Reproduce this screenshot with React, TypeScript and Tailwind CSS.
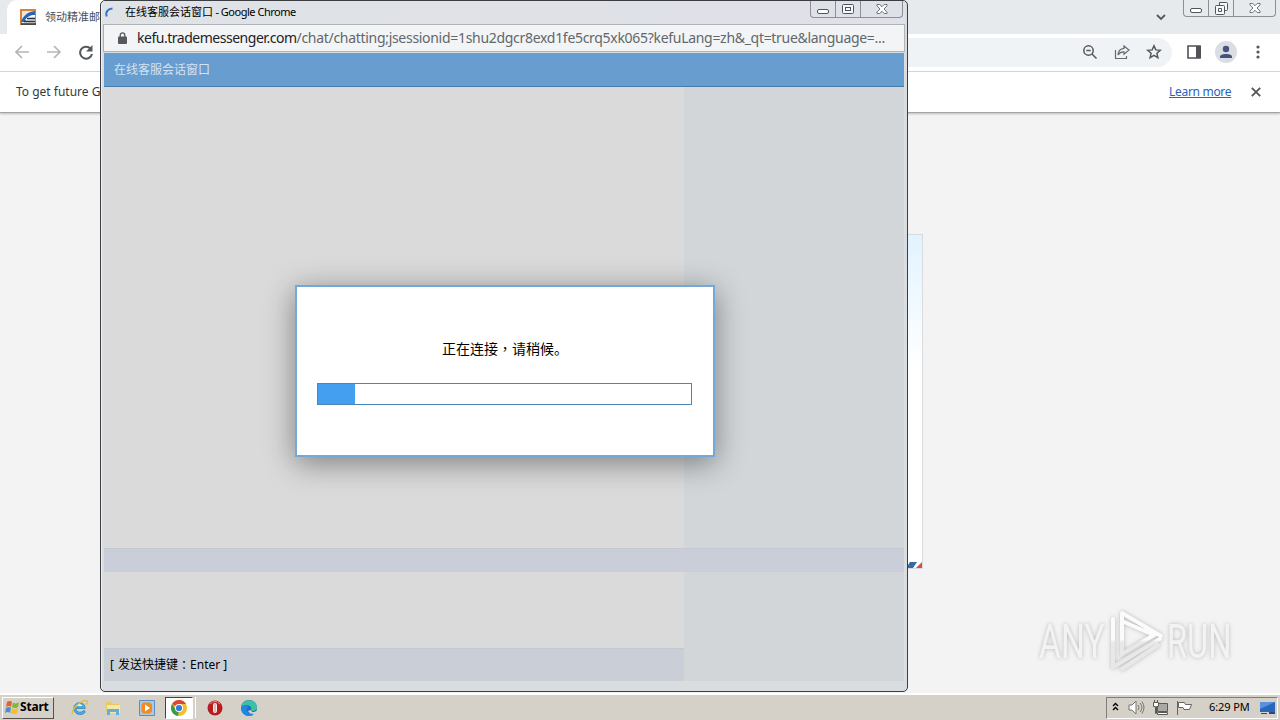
import React from 'react'

const WindowButtons = ({restored}: any) => {
  return (
    <div className={restored ? "flex h-[17px] w-[93px] rounded-b-[4px] border border-t-0 border-[#8b8f96] bg-[#e7eaed]" : "flex h-[17px] w-[93px] rounded-b-[4px] border border-t-0 border-[#8b8f96] bg-[#dfe1e8]"}>
      <div className="flex w-[25px] items-end justify-center border-r border-[#8b8f96] pb-[3px]">
        <div className="h-[5px] w-[12px] rounded-[2px] border border-[#50545c] bg-white" />
      </div>
      <div className="flex w-[25px] items-center justify-center border-r border-[#8b8f96]">
        {restored ? (
          <svg width="13" height="13" viewBox="0 0 13 13" fill="#f7f8fa" stroke="#50545c">
            <path d="M4.500.5h7q1 0 1 1v6q0 1-1 1h-7z" />
            <path d="M1.500 3.500h7q1 0 1 1v7q0 1-1 1h-7q-1 0-1-1v-7q0-1 1-1z" />
            <path d="M3.500 6.500h3v3h-3z" />
          </svg>
        ) : (
          <svg width="12" height="10" viewBox="0 0 12 10" fill="#f7f8fa" stroke="#50545c">
            <rect x=".5" y=".5" width="11" height="9" rx="1" />
            <rect x="3.500" y="3.500" width="5" height="3" />
          </svg>
        )}
      </div>
      <div className="flex flex-1 items-center justify-center">
        <svg width="12" height="10" viewBox="0 0 13 11" fill="#fff" stroke="#50545c" strokeWidth=".9">
          <path d="M1 .5h3l2.500 2.500L9 .5h3v1.500L8.700 5.500 12 9v1.500H9L6.500 8 4 10.500H1V9l3.300-3.500L1 2z" />
        </svg>
      </div>
    </div>
  )
}

const MainBrowser = () => {
  return (
    <div className="flex h-[693px] flex-col bg-[#f3f3f3]">
      <div className="flex h-[34px] shrink-0 justify-between bg-[#e7eaed]">
        <div className="ml-[7px] flex w-[240px] items-center rounded-tl-[10px] rounded-tr-lg bg-white pl-[13px]">
          <svg width="16" height="16" viewBox="0 0 16 16" className="shrink-0">
            <path d="M0 0h16v16H0z" fill="#d8833b" />
            <path d="M2 2h13v13H2z" fill="#f3e5d2" />
            <path d="M1 13C3 7 7 3 15 2v5C10 7 7 9 6 13z" fill="#2965b5" />
            <path d="M5 11c2-3 5-5 10-5v2c-4 0-7 1-8 4z" fill="#fff" />
            <path d="M7 9.500h8M4 12.500h11M1 15h15" stroke="#1d3559" strokeWidth="1.500" />
          </svg>
          <span className="ml-[9px] text-[11px] whitespace-nowrap text-[#4b4f54]">领动精准邮件</span>
        </div>
        <div className="flex items-start pr-[4px]">
          <svg width="10" height="7" viewBox="0 0 10 7" className="mt-[14px] mr-[17px]" fill="none" stroke="#55585d" strokeWidth="1.800">
            <path d="M1 1l4 4 4-4" />
          </svg>
          <WindowButtons restored={true} />
        </div>
      </div>

      <div className="flex h-[38px] shrink-0 items-center border-b border-[#d5d7da] bg-white pb-px pl-[14px]">
        <svg width="80" height="16" viewBox="0 0 80 16" fill="none" className="shrink-0">
          <path d="M15 8H2M8 2L2 8l6 6M33 8h13M40 2l6 6-6 6" stroke="#b4b6b9" strokeWidth="1.700" />
          <path d="M76.500 4.500A6 6 0 1 0 78 10" stroke="#55585c" strokeWidth="2" />
          <path d="M78.500 1v6.500H72z" fill="#55585c" />
        </svg>
        <div className="ml-[10px] flex h-[29px] w-[1068px] items-center justify-end gap-[16px] rounded-full bg-[#f0f3f6] pr-[10px]">
          <svg width="16" height="16" viewBox="0 0 16 16" fill="none" stroke="#55585c" strokeWidth="1.500">
            <circle cx="6.500" cy="6.500" r="4.700" />
            <path d="M10 10l4.500 4.500M4.300 6.500h4.400" />
          </svg>
          <svg width="16" height="16" viewBox="0 0 16 16" fill="none" stroke="#65686c" strokeWidth="1.200">
            <path d="M1.500 6v8.500h11V12" />
            <path d="M10 2l5 4-5 4.200V7.800C7 7.700 5.300 9 4 11c.3-4 2.300-6.400 6-6.700z" />
          </svg>
          <svg width="16" height="16" viewBox="0 0 16 16" fill="none" stroke="#55585c" strokeWidth="1.500">
            <path d="M8 1.800l1.800 4.100 4.500.4-3.400 3 1 4.400L8 11.400l-3.900 2.300 1-4.400-3.400-3 4.500-.4z" />
          </svg>
        </div>
        <svg width="14" height="14" viewBox="0 0 14 14" className="ml-[15px]">
          <path d="M1 1h12v12H1z" fill="#fff" stroke="#4f5256" strokeWidth="1.600" />
          <path d="M9 1h5v12H9z" fill="#4f5256" />
        </svg>
        <svg width="22" height="22" viewBox="0 0 22 22" className="ml-[14px]">
          <circle cx="11" cy="11" r="11" fill="#dadde3" />
          <circle cx="11" cy="8" r="3.200" fill="#46537a" />
          <path d="M5 17v-1.500c0-3.500 12-3.500 12 0V17z" fill="#46537a" />
        </svg>
        <svg width="4" height="14" viewBox="0 0 4 14" className="ml-[19px]" fill="#55585c">
          <circle cx="2" cy="2" r="1.600" />
          <circle cx="2" cy="7" r="1.600" />
          <circle cx="2" cy="12" r="1.600" />
        </svg>
      </div>

      <div className="flex h-[41px] shrink-0 items-center border-b border-[#a4a5a4] bg-white pr-[19px] pl-[16px] text-[12px] text-[#35383c] shadow-[0_1px_2px_#bbb]">
        <span className="flex-1 whitespace-nowrap">To get future Google Chrome updates</span>
        <span className="w-[64px] tracking-[-0.300px] whitespace-nowrap text-[#2764ba] underline">Learn more</span>
        <svg width="10" height="10" viewBox="0 0 10 10" className="ml-[18px]" stroke="#55585c" strokeWidth="1.900">
          <path d="M.8.800l8.400 8.400M9.200.800L.8 9.200" />
        </svg>
      </div>

      <div className="flex flex-1 justify-center pt-[121px]">
        <div className="flex h-[335px] w-[566px] items-end justify-end border border-[#d9dcde] bg-linear-to-b from-[#e1f3ff] to-white to-40%">
          <svg width="16" height="6" viewBox="0 0 16 6">
            <path d="M0 6L4 0h7L7 6z" fill="#386c9e" />
            <path d="M10 6l6-6v6z" fill="#d84a56" />
          </svg>
        </div>
      </div>
    </div>
  )
}

const ChatWindow = () => {
  return (
    <div className="absolute top-0 left-[100px] flex h-[692px] w-[808px] flex-col rounded-[5px] border border-[#3b3d42] bg-[#dadde0] px-[3px] shadow-[inset_1px_0_0_#eef1f3]">
      <div className="-mx-[2px] flex h-[23px] shrink-0 items-start justify-between rounded-t-[4px] bg-linear-to-r from-[#dfe3e6] to-[#dfe0e9] px-[2px]">
        <div className="flex h-[23px] items-center">
          <svg width="12" height="14" viewBox="0 0 12 14" fill="none" stroke="#3273d5" strokeWidth="2">
            <path d="M2.800 10.500C1 6 4 2.500 8.500 2.500" />
          </svg>
          <span className="ml-[9px] text-[11px] whitespace-nowrap text-black">
            <span>在线客服会话窗口</span>
            <span className="tracking-[-0.480px]"> - Google Chrome</span>
          </span>
        </div>
        <div className="mr-px">
          <WindowButtons restored={false} />
        </div>
      </div>

      <div className="-mx-px flex h-[28px] shrink-0 items-center border border-[#b0b3b6] bg-[#f2f4f6] pl-[14px]">
        <svg width="9" height="12" viewBox="0 0 9 12" className="shrink-0">
          <path d="M2.200 5V3.200c0-3 4.600-3 4.600 0V5" fill="none" stroke="#55585c" strokeWidth="1.300" />
          <rect y="4.500" width="9" height="7.500" rx="1" fill="#55585c" />
        </svg>
        <span className="mb-[2px] ml-[10px] text-[14px] whitespace-nowrap text-[#62676c]">
          <span className="tracking-[-0.480px] text-[#202327]">kefu.trademessenger.com</span>
          <span className="tracking-[-0.300px]">/chat/chatting;jsessionid=1shu2dgcr8exd1fe5crq5xk065?kefuLang=zh&amp;_qt=true&amp;language=...</span>
        </span>
      </div>

      <div className="mt-px flex h-[34px] shrink-0 items-center border-b border-[#477ba8] bg-[#689dcf] pl-[10px] text-[12px] text-[#d3e3f2]">
        在线客服会话窗口
      </div>

      <div className="grid h-[461px] shrink-0 grid-cols-[580px_1fr]">
        <div className="bg-[#dadada]" />
        <div className="bg-[#d2d6d9]" />
      </div>
      <div className="h-[24px] shrink-0 border-t border-[#c3c8d1] bg-[#caced8]" />
      <div className="grid h-[109px] shrink-0 grid-cols-[580px_1fr]">
        <div className="flex flex-col bg-[#dadada]">
          <div className="h-[76px]" />
          <div className="flex h-[33px] items-center border-t border-[#c3c8d1] bg-[#cacfd7] pl-[6px] text-[12px] whitespace-pre text-black">
            <span>[ </span>
            <span className="ml-px">发送快捷键</span>
            <span className="font-['Noto_Sans_CJK_TC',sans-serif]">：</span>
            <span>Enter ]</span>
          </div>
        </div>
        <div className="bg-[#d2d6d9]" />
      </div>

      <div className="absolute top-[284px] left-[194px] h-[172px] w-[420px] border-2 border-[#74a9d7] bg-white px-[20px] shadow-[0_6px_28px_rgba(0,0,0,0.42)]">
        <div className="mt-[49px] h-[24px] text-center text-[14px] leading-[24px] whitespace-nowrap text-black">
          正在连接<span className="font-['Noto_Sans_CJK_TC',sans-serif]">，</span>请稍候。
        </div>
        <div className="mt-[23px] h-[22px] w-[375px] border border-[#4b88b9]">
          <div className="h-full w-[37px] bg-[#459ff0]" />
        </div>
      </div>
    </div>
  )
}

const Watermark = () => {
  return (
    <div className="absolute top-[608px] left-[1038px] flex h-[66px] w-[200px] items-center opacity-80 drop-shadow-[0_0_2px_#aaa]">
      <svg width="200" height="66" viewBox="0 0 200 66" fill="none">
        <defs>
          <linearGradient id="mark" gradientUnits="userSpaceOnUse" x1="0" y1="0" x2="0" y2="66">
            <stop offset="0.480" stopColor="#fdfdfd" />
            <stop offset="0.520" stopColor="#e6e6e6" />
          </linearGradient>
        </defs>
        <text transform="translate(1 50) scale(.7 1)" fontSize="48" fontFamily="Roboto" fill="#f3f3f3">ANY</text>
        <text transform="translate(129 50) scale(.68 1)" fontSize="48" fontFamily="Roboto" fill="#f3f3f3">RUN</text>
        <path d="M75 11v48M84 5l39 23M84 5v41l32-19-30-13M75 59l47-28M84 61l36-24" stroke="url(#mark)" strokeWidth="4" strokeLinecap="round" />
      </svg>
    </div>
  )
}

const Taskbar = () => {
  return (
    <div className="flex h-[27px] items-center border-t-2 border-white bg-[#d5d0c8] pl-[2px]">
      <div className="flex h-[22px] w-[52px] items-center border border-t-white border-r-[#55524d] border-b-[#55524d] border-l-white pl-[2px] text-[12px] font-bold text-black">
        <svg width="15" height="15" viewBox="0 0 15 15" className="shrink-0">
          <path d="M2 2q3-2 5 0L6 7Q4 5 1 7z" fill="#e4632c" />
          <path d="M8 2.500q3 2 6-.2L13 7q-3 2-6 0z" fill="#7ab83f" />
          <path d="M1 8q3-2 5 0l-1 5q-2-2-5 0z" fill="#4b8fd1" />
          <path d="M7 8q3 2 6 0l-1 5q-3 2-6 0z" fill="#f4bd35" />
        </svg>
        <span className="pb-px tracking-[-0.200px]">Start</span>
      </div>
      <svg width="17" height="17" viewBox="0 0 18 18" className="ml-[17px]" fill="none">
        <path d="M14.500 10H5c1 5 6 5 9 2l1 2c-4 5-13 2-12-5s12-7 12 1z" fill="#4baee3" stroke="#398bc6" />
        <path d="M6 7.500h6c-1-3-5-3-6 0z" fill="#e6f5fc" />
        <path d="M2 16C-2 12 13-1 17 2c1 1 0 3-1 4" stroke="#e8bc42" strokeWidth="1.500" />
      </svg>
      <svg width="16" height="16" viewBox="0 0 16 16" className="ml-[17px]">
        <path d="M1 2h5l2 2h6v8H1z" fill="#e7c867" />
        <path d="M2 5h13v8H2z" fill="#f6e7a3" />
        <path d="M2 15V9h12v6h-3v-3H5v3z" fill="#64aeda" />
      </svg>
      <svg width="16" height="16" viewBox="0 0 16 16" className="ml-[18px]">
        <path d="M.5.500h15v15H.5z" fill="#a9cbe6" stroke="#5c8fbd" />
        <path d="M4 2.500h7l2 2v7l-2 2H4l-1.500-2v-7z" fill="#f18a21" />
        <path d="M6 4.500v7l5-3.500z" fill="#fff" />
      </svg>
      <div className="ml-[10px] flex h-[22px] w-[28px] items-center justify-center border border-t-[#45423e] border-r-white border-b-white border-l-[#45423e] bg-white">
        <svg width="16" height="16" viewBox="0 0 16 16">
          <circle cx="8" cy="8" r="8" fill="#f4bd2b" />
          <path d="M8 8L1.100 4A8 8 0 0 1 15 4H8z" fill="#dc4639" />
          <path d="M8 8l-1 8A8 8 0 0 1 1.100 4L5 10l3 2z" fill="#379b51" />
          <circle cx="8" cy="8" r="4" fill="#fff" />
          <circle cx="8" cy="8" r="3.100" fill="#3979dc" />
        </svg>
      </div>
      <div className="h-[21px] w-[3px] border-r border-white bg-[#d5d0c8]" />
      <svg width="16" height="16" viewBox="0 0 16 16" className="ml-[11px]">
        <circle cx="8" cy="8" r="7.500" fill="#b71c20" />
        <path d="M3 4q5-5 10 0" stroke="#e98c83" fill="none" />
        <rect x="6" y="3" width="4" height="10" rx="2" fill="#f7e9e5" />
        <rect x="7.500" y="4" width="1" height="8" fill="#c98d8b" />
      </svg>
      <svg width="16" height="16" viewBox="0 0 16 16" className="ml-[18px]">
        <circle cx="8" cy="8" r="8" fill="#1771c9" />
        <path d="M0 7C1-2 15-2 16 7c0 4-5 5-6 3 2-4-5-7-10-3z" fill="#3ebfa8" />
        <path d="M10 10c0 2 3 3 5 1l1 1-2 4-4-1-3-4z" fill="#d5d0c8" />
        <path d="M0 8c2-4 7-3 7-1-3 3-1 7 6 7C7 19 0 14 0 8z" fill="#2587dc" />
      </svg>

      <div className="mr-[2px] ml-auto flex h-[22px] w-[172px] items-center border border-t-[#827e77] border-r-white border-b-white border-l-[#827e77] text-[11px] text-black">
        <svg width="7" height="9" viewBox="0 0 7 9" className="mb-[2px] ml-[5px]" fill="none" stroke="#000" strokeWidth="1.400">
          <path d="M1 4l2.500-2.500L6 4M1 8l2.500-2.500L6 8" />
        </svg>
        <svg width="17" height="15" viewBox="0 0 17 15" className="ml-[9px]" fill="none" stroke="#77746f">
          <path d="M1 5h3l4-4v13l-4-4H1z" fill="#fff" />
          <path d="M10 5q2 2.500 0 5M12 3q4 4.500 0 9M14 1.500q4 6 0 12" />
        </svg>
        <svg width="17" height="16" viewBox="0 0 17 16" className="ml-[7px]" stroke="#5c5a57">
          <path d="M5.500 3.500h10v8h-10z" fill="#aaa9a6" />
          <path d="M5.500 12.500h10v2h-10z" fill="#fff" />
          <path d="M1.500 2.500h5v4h-2v7h-1v-7h-2zM2.500 0v3M5.500 0v3" fill="#fff" />
        </svg>
        <svg width="17" height="16" viewBox="0 0 17 16" className="ml-[7px]" fill="#fff" stroke="#686560">
          <path d="M1.500 1v14M2.500 2.500h6l1 2h6l-2 5H8l-1-2H2.500z" />
        </svg>
        <span className="ml-[16px] w-[39px] tracking-[-0.100px] whitespace-nowrap">6:29 PM</span>
        <svg width="15" height="14" viewBox="0 0 15 14" className="ml-[12px]">
          <path d="M0 1h15v10H0z" fill="#2867bd" />
          <path d="M0 1h15L0 8z" fill="#5792da" />
          <path d="M1 12h6v1H1zM9 11h6v2H9z" fill="#294c7d" />
        </svg>
      </div>
    </div>
  )
}

const App = () => {
  return (
    <div className="relative h-[720px] w-[1280px] overflow-hidden font-['Noto_Sans','Noto_Sans_CJK_SC',sans-serif]">
      <MainBrowser />
      <Taskbar />
      <Watermark />
      <ChatWindow />
    </div>
  )
}

export default App
